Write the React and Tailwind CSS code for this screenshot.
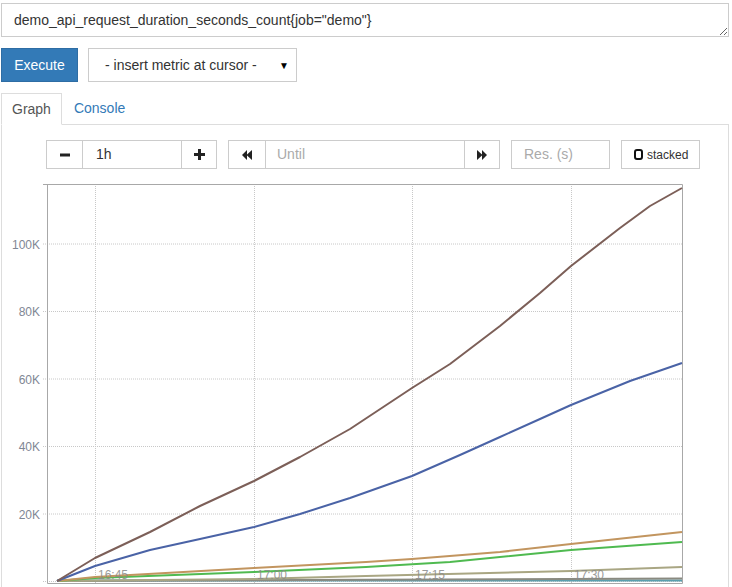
import React from 'react';

const font = { fontFamily: '"Liberation Sans", Arial, sans-serif' };

const series = [
  { color: '#5a9fae', points: '57,580.5 682,580.5' },
  { color: '#8a8a80', points: '57,581 300,580 682,578.5' },
  { color: '#a9a683', points: '57,581 254,579 366,576 571,571 682,567' },
  { color: '#4fba50', points: '57,581 95,578 254,572 366,567 450,562 571,550 682,542' },
  { color: '#c2955f', points: '57,581 95,577 254,568 366,562 412,559 500,552 571,544 682,532' },
  {
    color: '#4a63a6',
    points: '57,581 95,566 150,550 200,539 254,527 300,514 350,498 412,476 460,455 500,437 540,419 571,405 630,381 682,363',
  },
  {
    color: '#7c5f58',
    points: '57,581 95,558 150,532 200,506 254,481 300,457 350,429 412,388 450,364 500,326 540,293 571,266 620,228 650,206 682,188',
  },
];

const yTicks = [
  { label: '100K', y: 244 },
  { label: '80K', y: 311.5 },
  { label: '60K', y: 379 },
  { label: '40K', y: 446.5 },
  { label: '20K', y: 514 },
  { label: '', y: 581.5 },
];

const xTicks = [
  { label: '16:45', x: 95 },
  { label: '17:00', x: 254 },
  { label: '17:15', x: 412 },
  { label: '17:30', x: 571 },
];

const Chart = () => (
  <svg width="725" height="403" viewBox="2 184 725 403" className="block">
    {/* grid */}
    {yTicks.map((t) => (
      <line key={t.y} x1="43" x2="682" y1={t.y} y2={t.y} stroke="#c8c8c8" strokeDasharray="1 1" />
    ))}
    {xTicks.map((t) => (
      <line key={t.x} x1={t.x + 0.5} x2={t.x + 0.5} y1="184" y2="583" stroke="#c8c8c8" strokeDasharray="1 1" />
    ))}
    {/* frame */}
    <path d="M43 184.5 H682.5 V583.5 M47.5 184 V583.5 H682.5" fill="none" stroke="#a8a8a8" />
    {yTicks.map((t) =>
      t.label ? (
        <text key={t.label} x="40" y={t.y + 4.5} textAnchor="end" fontSize="12" fill="#7f8794" style={font}>
          {t.label}
        </text>
      ) : null
    )}
    {series.map((s) => (
      <polyline key={s.color} points={s.points} fill="none" stroke={s.color} strokeWidth="2" strokeLinejoin="round" />
    ))}
    {xTicks.map((t) => (
      <text key={t.label} x={t.x + 3} y="579" fontSize="12" fill="#8a8a8a" opacity="0.85" style={font}>
        {t.label}
      </text>
    ))}
  </svg>
);

const MinusIcon = () => (
  <svg width="10" height="10" viewBox="0 0 10 10">
    <rect x="0" y="3.5" width="10" height="3" fill="#222" />
  </svg>
);

const PlusIcon = () => (
  <svg width="11" height="11" viewBox="0 0 11 11">
    <rect x="0" y="4" width="11" height="3" fill="#222" />
    <rect x="4" y="0" width="3" height="11" fill="#222" />
  </svg>
);

const BackIcon = () => (
  <svg width="10" height="10" viewBox="0 0 10 10">
    <path d="M0 5 L5 0 V10 Z M4.5 5 L10 0 V10 Z" fill="#222" />
  </svg>
);

const ForwardIcon = () => (
  <svg width="10" height="10" viewBox="0 0 10 10">
    <path d="M10 5 L5 0 V10 Z M5.5 5 L0 0 V10 Z" fill="#222" />
  </svg>
);

export default function App() {
  return (
    <div className="w-[732px] h-[587px] overflow-hidden bg-white text-[14px] text-[#333]" style={font}>
      <div className="pt-[3px] pl-[1px] pr-[3px]">
        <textarea
          className="block w-[728px] h-[34px] border border-[#ccc] px-3 py-[6px] leading-5 text-[14px] text-[#333] outline-none"
          style={font}
          defaultValue={'demo_api_request_duration_seconds_count{job="demo"}'}
        />
      </div>

      <div className="flex gap-[10px] pl-[1px] mt-[11px]">
        <button className="w-[77px] h-[34px] bg-[#337ab7] border border-[#2e6da4] text-white text-[14px]">
          Execute
        </button>
        <div className="w-[209px] h-[34px] border border-[#ccc] flex items-center pl-4 pr-[7px]">
          <span className="flex-1">- insert metric at cursor -</span>
          <span className="text-[10px] text-black">▼</span>
        </div>
      </div>

      <div className="mt-[11px] pl-[1px] w-[729px]">
        <div className="flex border-b border-[#ddd]">
          <div className="-mb-px bg-white border border-[#ddd] border-b-white px-[10px] py-[5px] leading-5 text-[#555]">
            Graph
          </div>
          <div className="ml-[2px] px-[10px] py-[5px] leading-5 text-[#337ab7]">Console</div>
        </div>

        <div className="border-l border-r border-[#ddd] h-[470px]">
          <div className="flex pt-[15px] pl-[44px] gap-[11px] h-[44px]">
            <div className="flex h-[29px] border border-[#ccc]">
              <div className="w-[36px] flex items-center justify-center border-r border-[#ccc]">
                <MinusIcon />
              </div>
              <div className="w-[98px] flex items-center pl-[13px] text-[#333]">1h</div>
              <div className="w-[35px] flex items-center justify-center border-l border-[#ccc]">
                <PlusIcon />
              </div>
            </div>
            <div className="flex h-[29px] border border-[#ccc]">
              <div className="w-[37px] flex items-center justify-center border-r border-[#ccc]">
                <BackIcon />
              </div>
              <div className="w-[198px] flex items-center pl-[11px] text-[#aaa]">Until</div>
              <div className="w-[35px] flex items-center justify-center border-l border-[#ccc]">
                <ForwardIcon />
              </div>
            </div>
            <div className="w-[99px] h-[29px] border border-[#ccc] flex items-center pl-[12px] text-[#aaa]">
              Res. (s)
            </div>
            <div className="w-[79px] h-[29px] border border-[#ccc] flex items-center pl-[12px] gap-[4px] text-[12px] text-[#333]">
              <span className="inline-block w-[9px] h-[11px] border-2 border-[#111] rounded-[3px]" />
              stacked
            </div>
          </div>
          <div className="mt-[15px]">
            <Chart />
          </div>
        </div>
      </div>
    </div>
  );
}
